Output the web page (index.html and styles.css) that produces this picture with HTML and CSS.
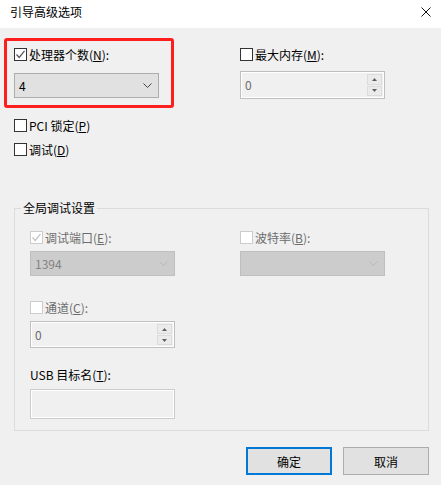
FILE: index.html
```html
<!DOCTYPE html>
<html lang="zh-CN">
<head>
<meta charset="utf-8">
<title>引导高级选项</title>
<link rel="stylesheet" href="styles.css">
</head>
<body>
<div class="dialog">
  <div class="titlebar">
    <span class="title">引导高级选项</span>
    <svg class="close" width="10" height="10" viewBox="0 0 10 10"><path d="M0.5 0.5 L9.5 9.5 M9.5 0.5 L0.5 9.5" stroke="#111" stroke-width="1" fill="none"/></svg>
  </div>
  <div class="content">
    <div class="top">
      <div class="col-left">
        <div class="highlight">
          <div class="check-row">
            <span class="cb checked"><svg width="11" height="11" viewBox="0 0 11 11"><path d="M1.5 5.5 L4.2 8.5 L9.5 1.8" stroke="#5a5a5a" stroke-width="1.3" fill="none"/></svg></span>
            <span class="lbl">处理器个数(<u>N</u>):</span>
          </div>
          <div class="combo">
            <span class="val">4</span>
            <svg class="chev" width="9" height="5" viewBox="0 0 9 5"><path d="M0.5 0.5 L4.5 4.5 L8.5 0.5" stroke="#444" stroke-width="1" fill="none"/></svg>
          </div>
        </div>
        <div class="check-row row-pci">
          <span class="cb"></span>
          <span class="lbl">PCI 锁定(<u>P</u>)</span>
        </div>
        <div class="check-row row-debug">
          <span class="cb"></span>
          <span class="lbl">调试(<u>D</u>)</span>
        </div>
      </div>
      <div class="col-right">
        <div class="check-row row-mem">
          <span class="cb"></span>
          <span class="lbl">最大内存(<u>M</u>):</span>
        </div>
        <div class="spin spin-mem">
          <span class="val dis">0</span>
          <div class="spin-btns">
            <span class="sb"><svg width="5" height="3" viewBox="0 0 5 3"><path d="M0 3 L2.5 0 L5 3 Z" fill="#606060"/></svg></span>
            <span class="sb"><svg width="5" height="3" viewBox="0 0 5 3"><path d="M0 0 L2.5 3 L5 0 Z" fill="#606060"/></svg></span>
          </div>
        </div>
      </div>
    </div>

    <div class="group">
      <div class="legend">全局调试设置</div>
      <div class="group-grid">
        <div class="gcol-left">
          <div class="check-row row-port">
            <span class="cb disabled"><svg width="11" height="11" viewBox="0 0 11 11"><path d="M1.5 5.5 L4.2 8.5 L9.5 1.8" stroke="#c4c4c4" stroke-width="1.3" fill="none"/></svg></span>
            <span class="lbl dis">调试端口(<u>E</u>):</span>
          </div>
          <div class="combo disabled">
            <span class="val dis2">1394</span>
            <svg class="chev" width="9" height="5" viewBox="0 0 9 5"><path d="M0.5 0.5 L4.5 4.5 L8.5 0.5" stroke="#b8b8b8" stroke-width="1" fill="none"/></svg>
          </div>
          <div class="check-row row-chan">
            <span class="cb disabled"></span>
            <span class="lbl dis">通道(<u>C</u>):</span>
          </div>
          <div class="spin spin-chan">
            <span class="val dis">0</span>
            <div class="spin-btns">
              <span class="sb"><svg width="5" height="3" viewBox="0 0 5 3"><path d="M0 3 L2.5 0 L5 3 Z" fill="#606060"/></svg></span>
              <span class="sb"><svg width="5" height="3" viewBox="0 0 5 3"><path d="M0 0 L2.5 3 L5 0 Z" fill="#606060"/></svg></span>
            </div>
          </div>
          <div class="plain-label">USB 目标名(<u>T</u>):</div>
          <div class="textbox"></div>
        </div>
        <div class="gcol-right">
          <div class="check-row row-port">
            <span class="cb disabled"></span>
            <span class="lbl dis">波特率(<u>B</u>):</span>
          </div>
          <div class="combo disabled">
            <span class="val"></span>
            <svg class="chev" width="9" height="5" viewBox="0 0 9 5"><path d="M0.5 0.5 L4.5 4.5 L8.5 0.5" stroke="#b8b8b8" stroke-width="1" fill="none"/></svg>
          </div>
        </div>
      </div>
    </div>

    <div class="buttons">
      <button class="btn primary">确定</button>
      <button class="btn">取消</button>
    </div>
  </div>
</div>
</body>
</html>
```

FILE: styles.css
```css
* { box-sizing: border-box; }
html, body {
  margin: 0;
  padding: 0;
  background: #ffffff;
}
body {
  font-family: "Noto Sans CJK SC", "Noto Sans", sans-serif;
  font-size: 12px;
  color: #000;
  width: 442px;
  height: 485px;
  overflow: hidden;
}
.dialog {
  width: 441px;
  height: 485px;
  background: #f0f0f0;
}
.titlebar {
  height: 28px;
  background: #fff;
  display: flex;
  align-items: center;
  justify-content: space-between;
  padding: 0 10px 4px 10px;
}
.title {
  font-size: 12px;
  line-height: 16px;
  color: #000;
}
.close { display: block; margin-right: 0; }

.content {
  padding: 0 12px 0 14px;
}
.top {
  display: flex;
}
.col-left {
  width: 226px;
  display: flex;
  flex-direction: column;
}
.col-right {
  display: flex;
  flex-direction: column;
}

.highlight {
  margin-top: 10px;
  margin-left: -10px;
  width: 170px;
  height: 70px;
  border: 3px solid #ff1e1e;
  border-radius: 3px;
  padding: 7px 0 0 7px;
}

.check-row {
  display: flex;
  align-items: center;
  height: 13px;
  gap: 2px;
}
.cb {
  width: 13px;
  height: 13px;
  border: 1px solid #333;
  background: #fff;
  flex: none;
  display: flex;
  align-items: center;
  justify-content: center;
}
.cb svg { display: block; }
.cb.disabled {
  border-color: #cccccc;
  background: #fff;
}
.lbl {
  line-height: 16px;
  white-space: nowrap;
}
.dis { color: #6d6d6d; }
.dis2 { color: #838383; }
u { text-decoration: underline; text-underline-offset: 1px; }

.combo {
  margin-top: 12px;
  width: 145px;
  height: 25px;
  background: #e1e1e1;
  border: 1px solid #adadad;
  display: flex;
  align-items: center;
  justify-content: space-between;
  padding: 0 6px 0 4px;
}
.combo .val { line-height: 16px; }
.combo.disabled {
  background: #cccccc;
  border-color: #bfbfbf;
}
.chev { display: block; }

.row-pci { margin-top: 11px; }
.row-debug { margin-top: 11px; }
.row-mem { margin-top: 20px; }

.spin {
  width: 145px;
  height: 28px;
  border: 1px solid #bfbfbf;
  background: #f0f0f0;
  display: flex;
  align-items: stretch;
  justify-content: space-between;
  padding: 1px;
  box-shadow: inset 0 0 0 1px #ffffff;
}
.spin .val {
  padding-left: 3px;
  align-self: center;
  line-height: 16px;
}
.spin-mem { margin-top: 10px; }
.spin-btns {
  width: 16px;
  display: flex;
  flex-direction: column;
  gap: 1px;
  padding: 1px 1px 1px 0;
}
.sb {
  flex: 1;
  background: #ebebeb;
  border: 1px solid #dcdcdc;
  display: flex;
  align-items: center;
  justify-content: center;
}
.sb svg { display: block; }

.group {
  margin-top: 52px;
  width: 415px;
  height: 223px;
  border: 1px solid #dcdcdc;
  padding: 0 0 0 15px;
}
.legend {
  display: block;
  width: fit-content;
  margin: -9px 0 0 -9px;
  padding: 0 2px;
  background: #f0f0f0;
  line-height: 16px;
  height: 16px;
}
.group-grid {
  display: flex;
}
.gcol-left {
  width: 210px;
  display: flex;
  flex-direction: column;
}
.gcol-right {
  display: flex;
  flex-direction: column;
}
.row-port { margin-top: 15px; }
.group .combo { margin-top: 7px; }
.row-chan { margin-top: 25px; }
.spin-chan { margin-top: 7px; height: 27px; }
.plain-label {
  margin-top: 20px;
  height: 14px;
  line-height: 14px;
  white-space: nowrap;
}
.textbox {
  margin-top: 7px;
  width: 145px;
  height: 30px;
  border: 1px solid #cccccc;
  background: #f0f0f0;
  box-shadow: inset 0 0 0 1px #ffffff;
}

.buttons {
  margin-top: 16px;
  display: flex;
  justify-content: flex-end;
  gap: 11px;
}
.btn {
  width: 86px;
  height: 28px;
  background: #e1e1e1;
  border: 1px solid #adadad;
  font-family: "Noto Sans CJK SC", "Noto Sans", sans-serif;
  font-size: 12px;
  color: #000;
  padding: 0;
  margin: 0;
}
.btn.primary {
  border: 2px solid #0078d7;
}
```
